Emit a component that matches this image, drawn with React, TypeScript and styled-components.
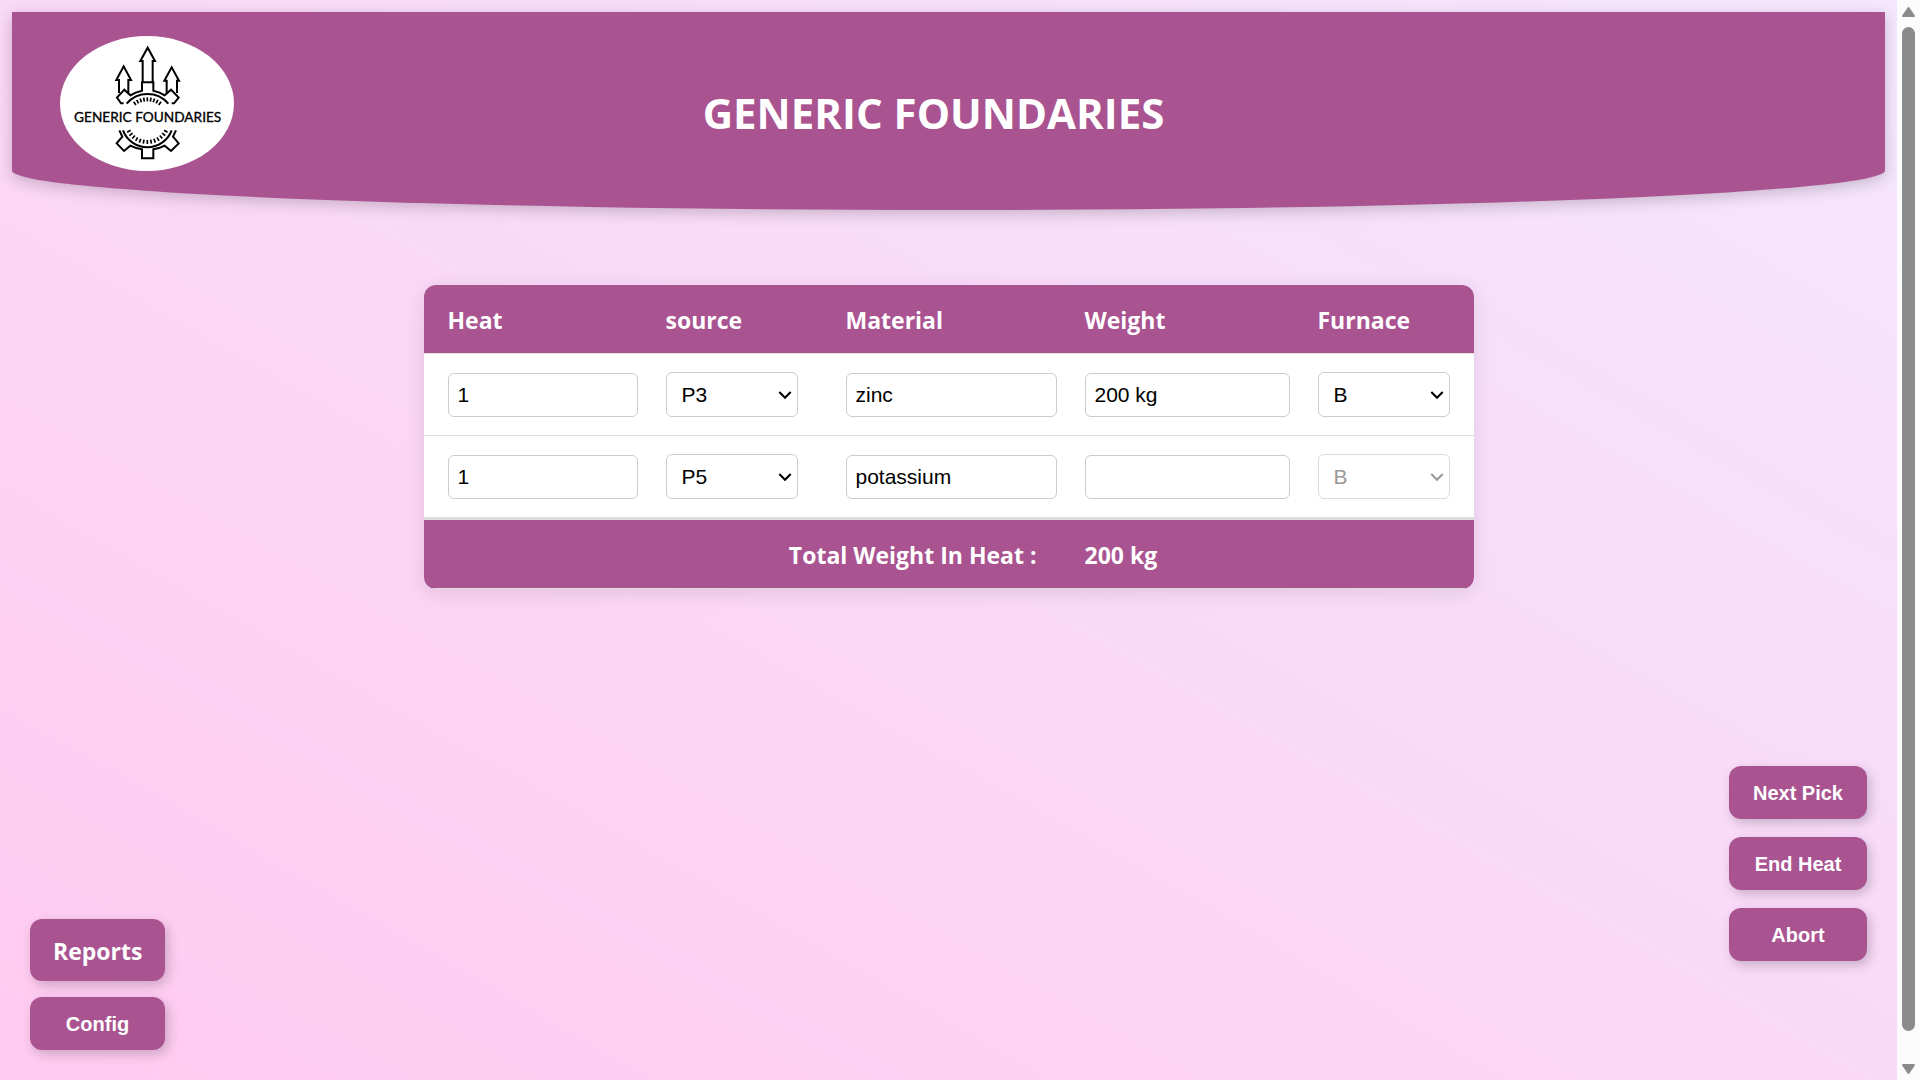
import React, { useState } from "react";
import styled, { createGlobalStyle } from "styled-components";

const plum = "#a95391";
const uiFont = `"Segoe UI", "Open Sans", "Noto Sans", sans-serif`;
const controlFont = `"Liberation Sans", Arial, sans-serif`;

const GlobalStyle = createGlobalStyle`
  *, *::before, *::after { box-sizing: border-box; }
  body { margin: 0; font-family: ${uiFont}; }
`;

const Shell = styled.div`
  display: grid;
  grid-template-columns: minmax(0, 1fr) 23px;
  min-height: 100vh;
`;

const Page = styled.div`
  display: flex;
  flex-direction: column;
  padding: 12px 12px 30px;
  background: linear-gradient(to top right, #ffcaf1, #fad9f8 52%, #f5e7ff);
`;

const Header = styled.header`
  display: grid;
  grid-template-columns: 174px 1fr 204px;
  align-items: start;
  padding: 24px 48px 39px;
  background: ${plum};
  border-radius: 0 0 50% 50% / 0 0 20% 20%;
  box-shadow: 0 4px 15px rgba(0, 0, 0, 0.2);
`;

const Logo = styled.svg`
  display: block;
  width: 174px;
  height: 135px;
`;

const Title = styled.h1`
  margin: 0;
  align-self: end;
  padding-bottom: 28px;
  color: #fff;
  font-size: 42px;
  line-height: 60px;
  font-weight: 700;
  text-align: center;
  white-space: nowrap;
`;

const TableCard = styled.main`
  width: 1050px;
  max-width: 100%;
  margin: 75px auto 60px;
  overflow: hidden;
  border-radius: 12px;
  background: #fff;
  box-shadow: 0 4px 20px rgba(0, 0, 0, 0.1);
`;

const Table = styled.table`
  width: 100%;
  table-layout: fixed;
  border-collapse: separate;
  border-spacing: 0;
`;

const Column = styled.col<{ $width?: number }>`
  width: ${(p) => (p.$width ? `${p.$width}px` : "auto")};
`;

const Band = styled.tr`
  background: ${plum};
  color: #fff;
  font-size: 23px;
  line-height: 32px;
`;

const HeadCell = styled.th<{ $align?: string }>`
  padding: 19px 24px 17px;
  border-bottom: 1px solid #ddd;
  font-weight: 700;
  text-align: ${(p) => p.$align ?? "left"};
`;

const Cell = styled.td<{ $thick?: boolean }>`
  height: ${(p) => (p.$thick ? 84 : 82)}px;
  padding: 0 24px;
  border-bottom: ${(p) => (p.$thick ? 3 : 1)}px solid #ddd;
`;

const Field = styled.input`
  display: block;
  box-sizing: content-box;
  width: 100%;
  height: 24px;
  padding: 9px;
  border: 1px solid #ccc;
  border-radius: 6px;
  background: #fff;
  color: #000;
  font: 21px/24px ${controlFont};
`;

const PickerBox = styled.div<{ $disabled?: boolean }>`
  display: grid;
  align-items: center;
  color: #000;
  opacity: ${(p) => (p.$disabled ? 0.7 : 1)};
  > * { grid-area: 1 / 1; }
`;

const Picker = styled.select`
  appearance: none;
  width: 100%;
  height: 45px;
  padding: 0 24px 0 15px;
  border: 1px solid #ccc;
  border-radius: 6px;
  background: #fff;
  color: #000;
  font: 21px/24px ${controlFont};
  &:disabled { opacity: 1; color: #6d6d6d; }
`;

const Chevron = styled.svg<{ $disabled?: boolean }>`
  justify-self: end;
  width: 14px;
  height: 10px;
  margin-right: 6px;
  color: ${(p) => (p.$disabled ? "#6d6d6d" : "#000")};
  pointer-events: none;
`;

const Actions = styled.div`
  display: flex;
  justify-content: space-between;
  align-items: flex-end;
  margin-top: auto;
  padding: 0 18px;
`;

const ButtonStack = styled.nav<{ $gap: number; $align?: string; $lift?: number }>`
  display: flex;
  flex-direction: column;
  align-items: ${(p) => p.$align ?? "stretch"};
  gap: ${(p) => p.$gap}px;
  margin-bottom: ${(p) => p.$lift ?? 0}px;
`;

const ActionButton = styled.button`
  min-width: 135px;
  height: 53px;
  padding: 0 24px;
  border: 0;
  border-radius: 12px;
  background: ${plum};
  box-shadow: 3px 4px 12px rgba(0, 0, 0, 0.2);
  color: #fff;
  font: 700 20px/24px ${controlFont};
  cursor: pointer;
`;

const ReportsButton = styled(ActionButton)`
  height: 62px;
  padding: 2px 23px 0;
  font: 700 23px/32px ${uiFont};
`;

const Scrollbar = styled.div`
  display: flex;
  flex-direction: column;
  align-items: center;
  height: 100vh;
  padding: 6px 0 5px;
  background: #fcfcfc;
`;

const Arrow = styled.svg`
  display: block;
  width: 15px;
  height: 12px;
`;

const Thumb = styled.div`
  flex: 1;
  width: 13px;
  margin: 9px 0 32px;
  border-radius: 7px;
  background: #8b8b8b;
`;

type SelectProps = {
  label: string;
  value: string;
  options: string[];
  disabled?: boolean;
  onPick: (value: string) => void;
};

function Select({ label, value, options, disabled, onPick }: SelectProps) {
  return (
    <PickerBox $disabled={disabled}>
      <Picker aria-label={label} value={value} disabled={disabled} onChange={(e) => onPick(e.target.value)}>
        {options.map((o) => (
          <option key={o}>{o}</option>
        ))}
      </Picker>
      <Chevron $disabled={disabled} viewBox="0 0 14 10" aria-hidden="true">
        <path d="M1.300 2L7 7.700L12.700 2" fill="none" stroke="currentColor" strokeWidth="2.100" />
      </Chevron>
    </PickerBox>
  );
}

function ticks(from: number, to: number, step: number) {
  const marks: React.ReactNode[] = [];
  for (let a = from; a <= to; a += step) {
    const r = (a * Math.PI) / 180;
    marks.push(
      <line
        key={a}
        x1={322 + 58 * Math.cos(r)}
        y1={302 + 58 * Math.sin(r)}
        x2={322 + 70 * Math.cos(r)}
        y2={302 + 70 * Math.sin(r)}
      />
    );
  }
  return marks;
}

function FoundryLogo() {
  return (
    <Logo viewBox="60 48 522 405" role="img" aria-label="Generic Foundaries logo">
      <ellipse cx="321" cy="250.500" rx="261" ry="202.500" fill="#fff" />
      <g fill="none" stroke="#000" strokeWidth="6">
        <path d="M308 187V123H301L323 83L345 123H338V187" />
        <path d="M237 219V180H229L251 139L273 180H265V222" />
        <path d="M380 222V182H373L395 142L417 182H411V219" />
        <path d="M251 250H243L231 233L253 209L271 226Q286 216 306 212V187H340V212Q360 216 374 226L393 209L416 233L402 250H395" />
        <path d="M260 251A82 82 0 0 1 385 251" />
        <path d="M238 331L247 350L230 370L252 393L271 377Q286 385 306 388V415H340V388Q360 385 374 377L393 393L416 370L399 350L408 331" />
        <path d="M249 331A78 78 0 0 0 395 331" />
        <g strokeWidth="5">
          {ticks(234, 306, 9)}
          {ticks(30, 150, 10)}
        </g>
      </g>
      <text
        x="323"
        y="306"
        textAnchor="middle"
        fill="#000"
        stroke="#000"
        strokeWidth="1"
        fontFamily="Lato, sans-serif"
        fontSize="41"
      >
        GENERIC FOUNDARIES
      </text>
    </Logo>
  );
}

const initialRows = [
  { heat: "1", source: "P3", material: "zinc", weight: "200 kg", furnace: "B", locked: false },
  { heat: "1", source: "P5", material: "potassium", weight: "", furnace: "B", locked: true },
];

export default function App() {
  const [rows, setRows] = useState(initialRows);
  const update = (i: number, key: string, value: string) =>
    setRows(rows.map((r, n) => (n === i ? { ...r, [key]: value } : r)));

  return (
    <>
      <GlobalStyle />
      <Shell>
        <Page>
          <Header>
            <FoundryLogo />
            <Title>GENERIC FOUNDARIES</Title>
          </Header>
          <TableCard>
            <Table>
              <colgroup>
                <Column $width={218} />
                <Column $width={180} />
                <Column $width={239} />
                <Column $width={233} />
                <Column />
              </colgroup>
              <thead>
                <Band>
                  <HeadCell scope="col">Heat</HeadCell>
                  <HeadCell scope="col">source</HeadCell>
                  <HeadCell scope="col">Material</HeadCell>
                  <HeadCell scope="col">Weight</HeadCell>
                  <HeadCell scope="col">Furnace</HeadCell>
                </Band>
              </thead>
              <tbody>
                {rows.map((row, i) => {
                  const thick = i === rows.length - 1;
                  return (
                    <tr key={i}>
                      <Cell $thick={thick}>
                        <Field aria-label="Heat" value={row.heat} onChange={(e) => update(i, "heat", e.target.value)} />
                      </Cell>
                      <Cell $thick={thick}>
                        <Select
                          label="Source"
                          value={row.source}
                          options={["P1", "P2", "P3", "P4", "P5"]}
                          onPick={(v) => update(i, "source", v)}
                        />
                      </Cell>
                      <Cell $thick={thick}>
                        <Field aria-label="Material" value={row.material} onChange={(e) => update(i, "material", e.target.value)} />
                      </Cell>
                      <Cell $thick={thick}>
                        <Field aria-label="Weight" value={row.weight} onChange={(e) => update(i, "weight", e.target.value)} />
                      </Cell>
                      <Cell $thick={thick}>
                        <Select
                          label="Furnace"
                          value={row.furnace}
                          options={["A", "B", "C"]}
                          disabled={row.locked}
                          onPick={(v) => update(i, "furnace", v)}
                        />
                      </Cell>
                    </tr>
                  );
                })}
              </tbody>
              <tfoot>
                <Band>
                  <HeadCell scope="row" colSpan={3} $align="right">Total Weight In Heat :</HeadCell>
                  <HeadCell as="td" colSpan={2}>200 kg</HeadCell>
                </Band>
              </tfoot>
            </Table>
          </TableCard>
          <Actions>
            <ButtonStack $gap={16} $align="flex-start">
              <ReportsButton type="button">Reports</ReportsButton>
              <ActionButton type="button">Config</ActionButton>
            </ButtonStack>
            <ButtonStack $gap={18} $lift={89}>
              <ActionButton type="button">Next Pick</ActionButton>
              <ActionButton type="button">End Heat</ActionButton>
              <ActionButton type="button">Abort</ActionButton>
            </ButtonStack>
          </Actions>
        </Page>
        <Scrollbar aria-hidden="true">
          <Arrow viewBox="0 0 15 12"><path d="M7.500 2L13 10H2Z" fill="#8b8b8b" stroke="#8b8b8b" strokeWidth="2" strokeLinejoin="round" /></Arrow>
          <Thumb />
          <Arrow viewBox="0 0 15 12"><path d="M7.500 10L13 2H2Z" fill="#8b8b8b" stroke="#8b8b8b" strokeWidth="2" strokeLinejoin="round" /></Arrow>
        </Scrollbar>
      </Shell>
    </>
  );
}
